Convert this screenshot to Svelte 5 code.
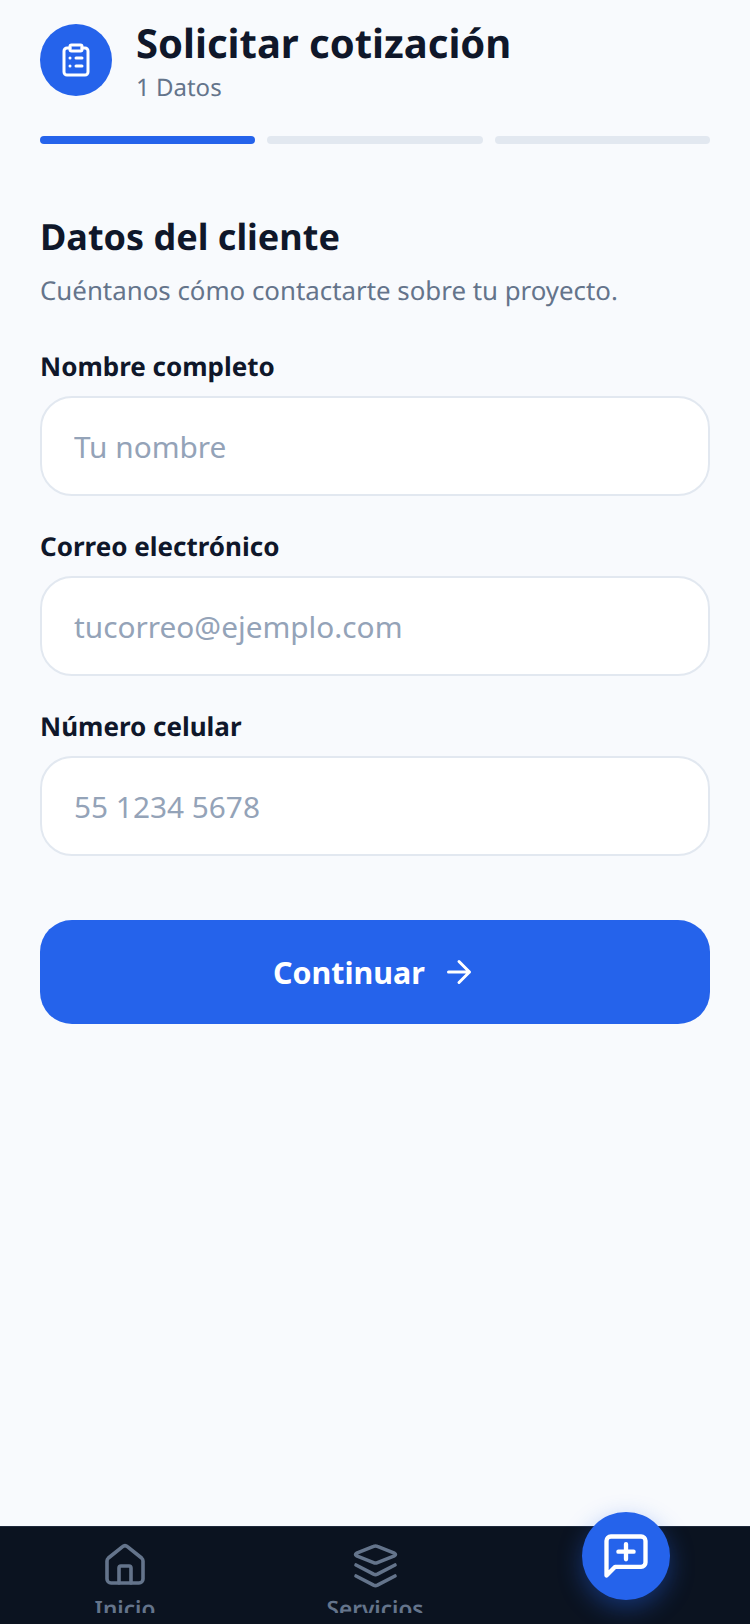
<script>
  const fields = [
    { label: 'Nombre completo', placeholder: 'Tu nombre', type: 'text' },
    { label: 'Correo electrónico', placeholder: 'tucorreo@ejemplo.com', type: 'email' },
    { label: 'Número celular', placeholder: '55 1234 5678', type: 'tel' }
  ];
</script>

<div class="page">
  <header>
    <div class="head">
      <div class="badge">
        <svg width="36" height="36" viewBox="0 0 24 24" fill="none" stroke="#fff" stroke-width="2" stroke-linecap="round" stroke-linejoin="round">
          <rect x="8" y="2" width="8" height="4" rx="1" />
          <path d="M16 4h2a2 2 0 0 1 2 2v14a2 2 0 0 1-2 2H6a2 2 0 0 1-2-2V6a2 2 0 0 1 2-2h2" />
          <path d="M12 10.7h4M12 16h4M8 10.7h.01M8 16h.01" />
        </svg>
      </div>
      <div class="titles">
        <h1>Solicitar cotización</h1>
        <p>1 Datos</p>
      </div>
    </div>
    <div class="steps">
      <span class="on"></span>
      <span></span>
      <span></span>
    </div>
  </header>

  <main>
    <h2>Datos del cliente</h2>
    <p class="sub">Cuéntanos cómo contactarte sobre tu proyecto.</p>
    <form on:submit|preventDefault>
      {#each fields as f}
        <label>
          <span>{f.label}</span>
          <input type={f.type} placeholder={f.placeholder} />
        </label>
      {/each}
      <button type="submit">
        Continuar
        <svg width="36" height="36" viewBox="0 0 24 24" fill="none" stroke="#fff" stroke-width="2" stroke-linecap="round" stroke-linejoin="round">
          <path d="M5 12h14M12 5l7 7-7 7" />
        </svg>
      </button>
    </form>
  </main>

  <nav>
    <div class="tab">
      <svg width="48" height="50" viewBox="0 0 48 50" fill="none" stroke="#64748b" stroke-width="3.6" stroke-linecap="round" stroke-linejoin="round">
        <path d="M21.6 6.6a3.6 3.6 0 0 1 4.8 0L40.6 18a4 4 0 0 1 1.4 3v18a4 4 0 0 1-4 4H10a4 4 0 0 1-4-4V21a4 4 0 0 1 1.4-3z" />
        <path d="M18 43V28a2 2 0 0 1 2-2h8a2 2 0 0 1 2 2v15" />
      </svg>
      <span>Inicio</span>
    </div>
    <div class="tab">
      <svg width="48" height="50" viewBox="0 0 48 50" fill="none" stroke="#64748b" stroke-width="3.6" stroke-linecap="round" stroke-linejoin="round">
        <path d="M22.6 6.4Q24.5 5.5 26.4 6.4L43.4 13.2Q45.5 14.5 43.4 15.8L26.4 22.6Q24.5 23.5 22.6 22.6L5.6 15.8Q3.5 14.5 5.6 13.2Z" />
        <path d="M5 25l17.6 9.2q1.9.9 3.8 0L44 25" />
        <path d="M5 36l17.6 9.2q1.9.9 3.8 0L44 36" />
      </svg>
      <span>Servicios</span>
    </div>
    <div class="tab"></div>
    <div class="fab">
      <svg width="52" height="52" viewBox="0 0 24 24" fill="none" stroke="#fff" stroke-width="2" stroke-linecap="round" stroke-linejoin="round">
        <path d="M21 15a2 2 0 0 1-2 2H7l-4 4V5a2 2 0 0 1 2-2h14a2 2 0 0 1 2 2z" />
        <path d="M12 6.5v7M8.5 10h7" />
      </svg>
    </div>
  </nav>
</div>

<style>
  :global(body) {
    margin: 0;
    background: #f8fafd;
    font-family: 'Noto Sans', sans-serif;
    text-rendering: geometricPrecision;
  }

  .page {
    height: 1624px;
    display: flex;
    flex-direction: column;
    overflow: hidden;
    background: #f8fafd;
  }

  header {
    padding: 24px 40px 0;
  }

  .head {
    display: flex;
    align-items: flex-start;
    gap: 24px;
  }

  .badge {
    width: 72px;
    height: 72px;
    border-radius: 50%;
    background: #2563eb;
    display: flex;
    align-items: center;
    justify-content: center;
  }

  h1 {
    margin: 0;
    font-size: 40px;
    line-height: 38px;
    font-weight: 700;
    color: #0f172a;
  }

  .titles p {
    margin: 10px 0 0;
    font-size: 24px;
    line-height: 32px;
    color: #64748b;
  }

  .steps {
    display: flex;
    gap: 12px;
    margin-top: 32px;
  }

  .steps span {
    flex: 1;
    height: 8px;
    border-radius: 4px;
    background: #e2e8f0;
  }

  .steps .on {
    background: #2563eb;
  }

  main {
    flex: 1;
    padding: 73px 40px 0;
  }

  h2 {
    margin: 0;
    font-size: 36px;
    line-height: 40px;
    font-weight: 700;
    color: #0f172a;
  }

  .sub {
    margin: 15px 0 0;
    font-size: 25.85px;
    line-height: 36px;
    color: #64748b;
  }

  form {
    display: flex;
    flex-direction: column;
    gap: 32px;
    margin-top: 40px;
  }

  label {
    display: flex;
    flex-direction: column;
    gap: 12px;
  }

  label span {
    font-size: 26px;
    line-height: 36px;
    font-weight: 700;
    color: #0f172a;
  }

  input {
    height: 100px;
    box-sizing: border-box;
    padding: 0 32px;
    border: 2px solid #e2e8f0;
    border-radius: 32px;
    background: #fff;
    font-family: inherit;
    font-size: 29.8px;
    color: #0f172a;
    outline: none;
  }

  input::placeholder {
    color: #94a3b8;
  }

  button {
    height: 104px;
    margin-top: 32px;
    border: none;
    border-radius: 32px;
    background: #2563eb;
    color: #fff;
    font-family: inherit;
    font-size: 30.4px;
    font-weight: 700;
    display: flex;
    align-items: center;
    justify-content: center;
    gap: 16px;
  }

  nav {
    position: relative;
    height: 98px;
    box-sizing: border-box;
    flex: none;
    display: grid;
    grid-template-columns: repeat(3, 1fr);
    align-items: start;
    background: #0b1320;
    border-top: 1px solid #1e293b;
  }

  .tab {
    height: 86px;
    box-sizing: border-box;
    overflow: hidden;
    display: flex;
    flex-direction: column;
    align-items: center;
    padding-top: 13px;
    gap: 5px;
    color: #64748b;
    font-size: 22.6px;
    line-height: 28px;
    font-weight: 600;
  }

  .tab svg,
  .tab span {
    flex: none;
  }

  .fab {
    position: absolute;
    right: 80px;
    top: -15px;
    width: 88px;
    height: 88px;
    border-radius: 50%;
    background: #2563eb;
    box-shadow: 0 8px 24px rgba(37, 99, 235, 0.4);
    display: flex;
    align-items: center;
    justify-content: center;
  }
</style>
